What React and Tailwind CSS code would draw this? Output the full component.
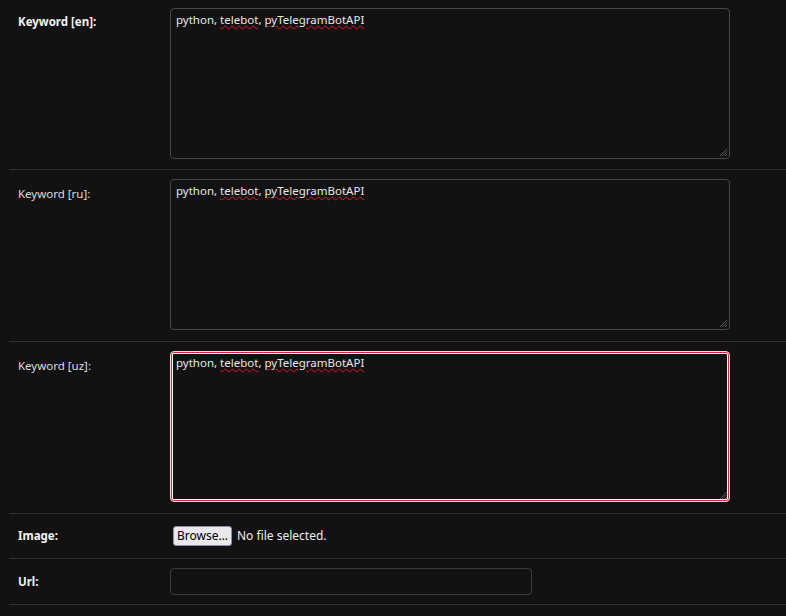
import React from "react";

const font = { fontFamily: '"Noto Sans", "DejaVu Sans", sans-serif' };

function Handle() {
  return (
    <svg className="absolute right-[1px] bottom-[1px]" width="9" height="9" viewBox="0 0 9 9">
      <path d="M8 1 L1 8 M8 3.5 L3.5 8 M8 6 L6 8" stroke="#5a5a5a" strokeWidth="1" />
    </svg>
  );
}

function Area({ focused }) {
  return (
    <div
      className={
        "relative w-[560px] h-[151px] rounded-[4px] border px-[5px] pt-[3px] text-[11.5px] leading-[16px] text-[#e8e8e8] " +
        (focused
          ? "border-[#f3dede] shadow-[inset_0_0_0_1px_#d81f3c,inset_0_0_0_2px_#ffffff]"
          : "border-[#474747]")
      }
    >
      <span>python, </span>
      <span className="underline decoration-wavy decoration-[#e0182a] decoration-1 underline-offset-[1px]">telebot</span>
      <span>, </span>
      <span className="underline decoration-wavy decoration-[#e0182a] decoration-1 underline-offset-[1px]">pyTelegramBotAPI</span>
      <Handle />
    </div>
  );
}

function Row({ label, bold, children, className, labelClass }) {
  return (
    <div className={"ml-[9px] flex border-b border-[#303030] pl-[9px] " + className}>
      <div
        className={
          "w-[152px] shrink-0 text-[11.5px] " +
          (bold ? "font-bold text-[#f2f2f2] " : "text-[#dcdcdc] ") +
          (labelClass || "")
        }
      >
        {label}
      </div>
      {children}
    </div>
  );
}

export default function App() {
  return (
    <div className="w-[786px] h-[616px] overflow-hidden bg-[#121212]" style={font}>
      <Row label="Keyword [en]:" bold className="pt-[8px] pb-[10px]" labelClass="pt-[5px]">
        <Area />
      </Row>
      <Row label="Keyword [ru]:" className="pt-[9px] pb-[11px]" labelClass="pt-[6px]">
        <Area />
      </Row>
      <Row label="Keyword [uz]:" className="pt-[9px] pb-[11px]" labelClass="pt-[6px]">
        <Area focused />
      </Row>
      <Row label="Image:" bold className="h-[45px] items-center">
        <div className="flex items-center gap-[5px] pl-[3px]">
          <button className="h-[20px] rounded-[3px] border border-[#8f8f9d] bg-[#e9e9ed] px-[3px] text-[12px] leading-[16px] text-black" style={font}>
            Browse…
          </button>
          <span className="text-[12px] text-[#eeeeee]">No file selected.</span>
        </div>
      </Row>
      <Row label="Url:" bold className="h-[46px] items-center">
        <div className="h-[27px] w-[362px] rounded-[4px] border border-[#3c3c3c]" />
      </Row>
    </div>
  );
}
